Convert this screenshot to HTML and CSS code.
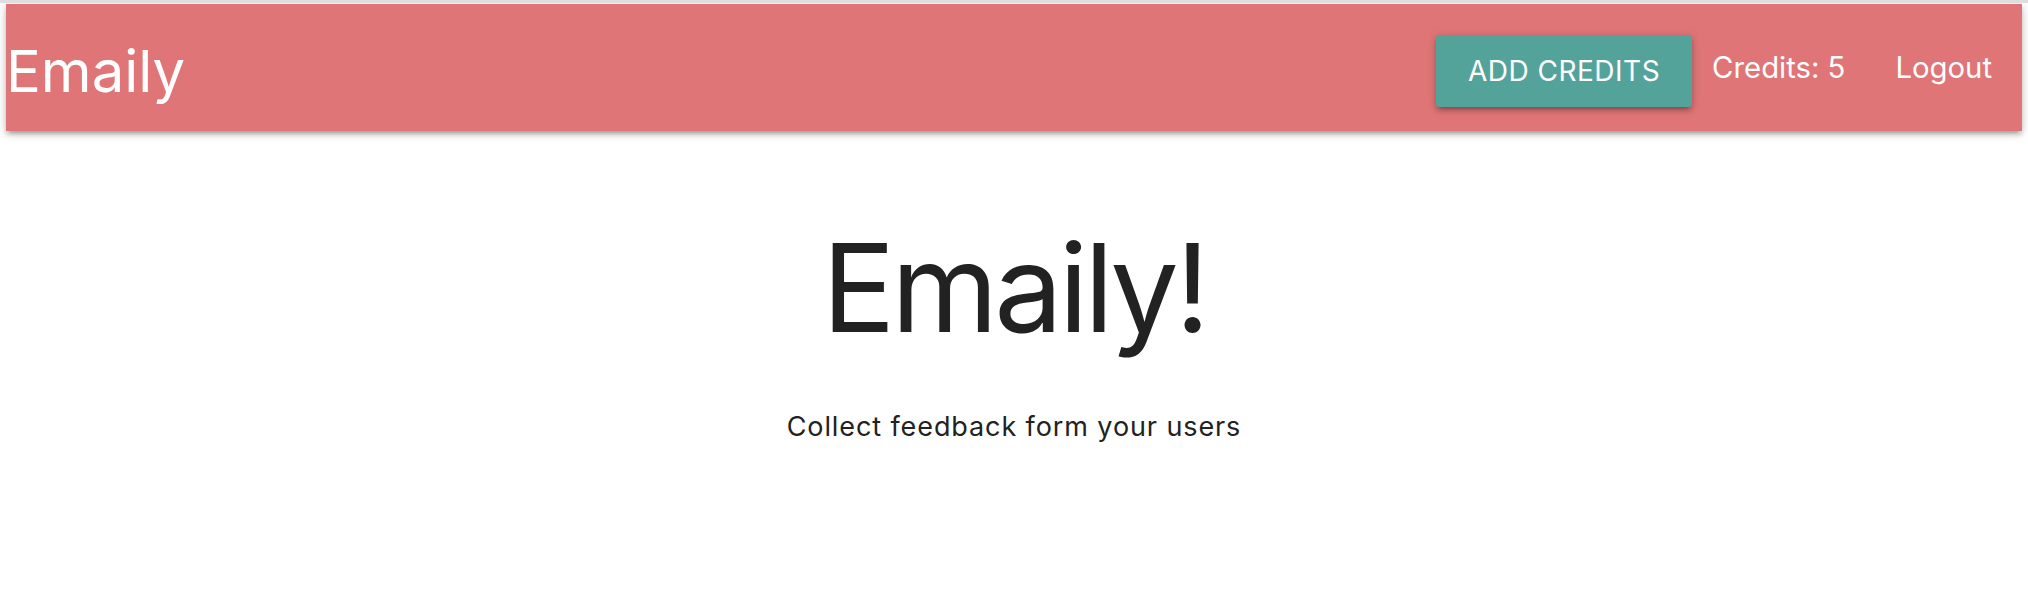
FILE: index.html
```html
<!DOCTYPE html>
<html lang="en">
<head>
<meta charset="utf-8">
<title>Emaily</title>
<link rel="stylesheet" href="styles.css">
</head>
<body>
<div class="nav-wrap">
  <nav class="nav">
    <a class="brand" href="#">Emaily</a>
    <ul class="menu">
      <li><button class="btn">Add Credits</button></li>
      <li class="credits">Credits: 5</li>
      <li><a class="link" href="#">Logout</a></li>
    </ul>
  </nav>
</div>
<main class="landing">
  <h1 class="title">Emaily!</h1>
  <p class="subtitle">Collect feedback form your users</p>
</main>
</body>
</html>
```

FILE: styles.css
```css
html, body {
  margin: 0;
  padding: 0;
  background: #ffffff;
}
body {
  border-top: 3px solid #dedede;
  font-family: Inter, "Noto Sans", Roboto, sans-serif;
  color: #212121;
}
.nav-wrap {
  padding: 1px 6px 0;
}
.nav {
  height: 127px;
  background: #df7576;
  display: flex;
  align-items: center;
  justify-content: space-between;
  box-shadow: 0 4px 4px 0 rgba(0,0,0,.14), 0 6px 2px -4px rgba(0,0,0,.12), 0 2px 10px 0 rgba(0,0,0,.2);
}
.brand {
  color: #fff;
  text-decoration: none;
  font-size: 58px;
  line-height: 1;
  padding-top: 6px;
}
.menu {
  list-style: none;
  margin: 0;
  padding: 0;
  display: flex;
  align-items: center;
  color: #fff;
  font-size: 29.3px;
}
.btn {
  height: 72px;
  margin-top: 7px;
  padding: 0 32px;
  border: none;
  border-radius: 4px;
  background: #54a39a;
  color: #fff;
  font-family: inherit;
  font-size: 28px;
  letter-spacing: 0.5px;
  text-transform: uppercase;
  box-shadow: 0 4px 4px 0 rgba(0,0,0,.14), 0 6px 2px -4px rgba(0,0,0,.12), 0 2px 10px 0 rgba(0,0,0,.2);
}
.credits {
  margin: 0 20px;
}
.link {
  display: block;
  padding: 0 30px;
  color: #fff;
  text-decoration: none;
}
.landing {
  text-align: center;
  padding-top: 90px;
}
.title {
  margin: 0;
  font-size: 122px;
  font-weight: 400;
  line-height: 134px;
  letter-spacing: -4px;
  color: #222;
}
.subtitle {
  margin: 54px 0 0;
  font-size: 27px;
  line-height: 36px;
  letter-spacing: 0.9px;
  color: #222;
}
```
